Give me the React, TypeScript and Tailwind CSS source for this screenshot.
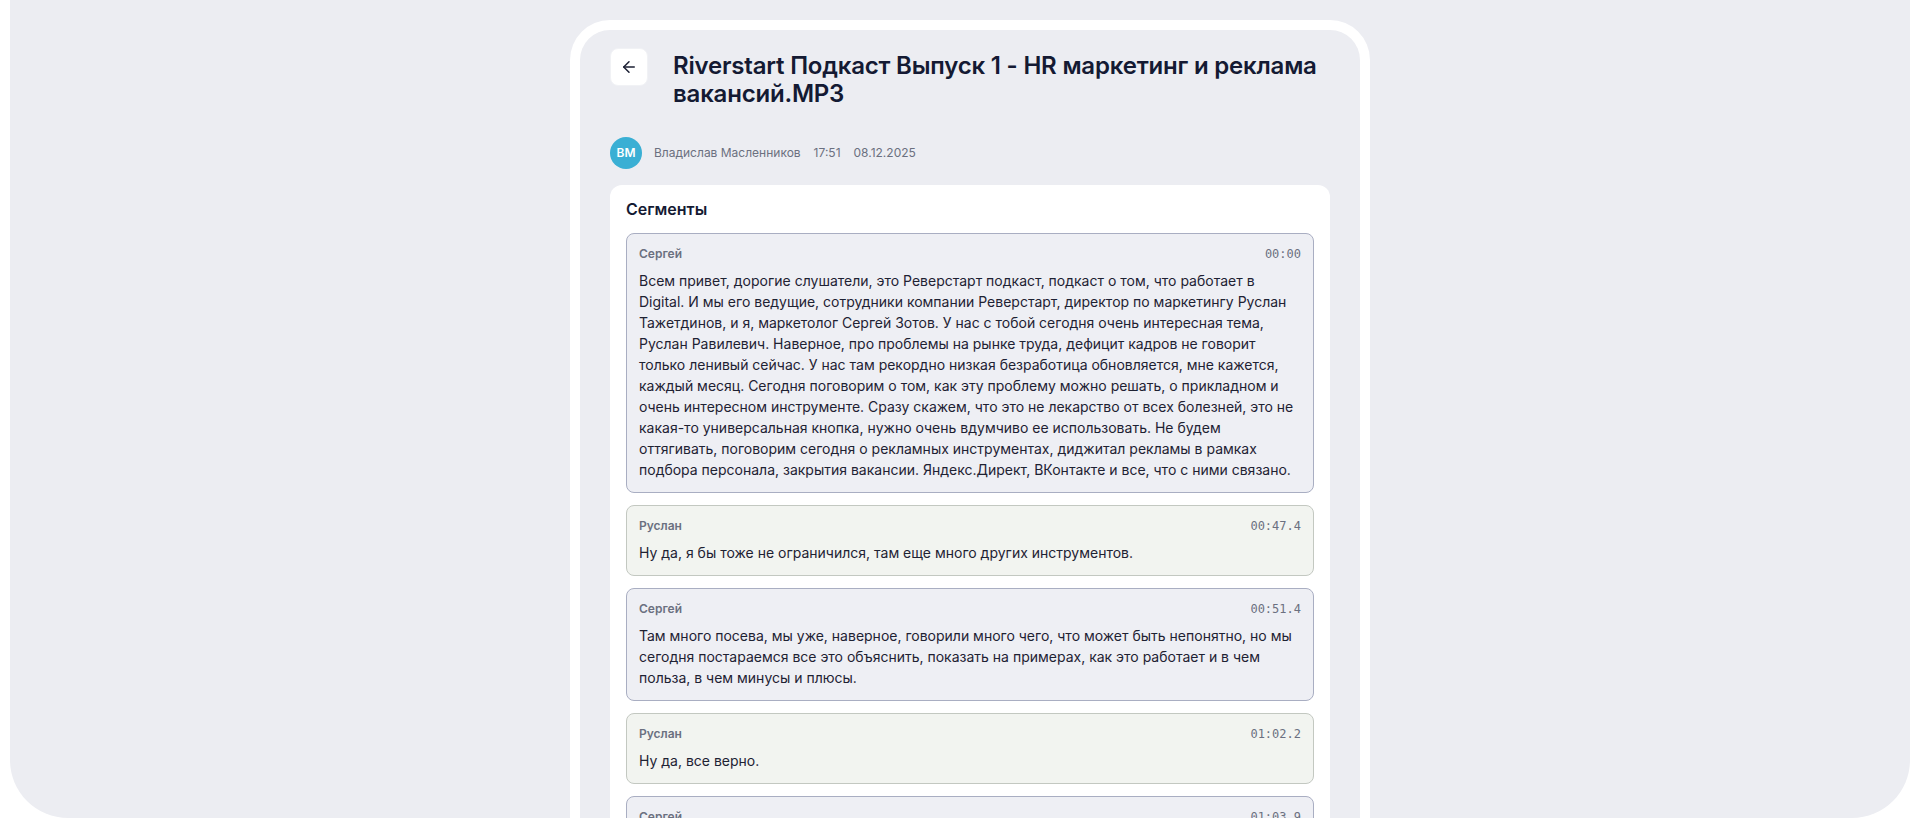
import React from "react";

type Seg = { speaker: string; time: string; text: string };

const segments: Seg[] = [
  {
    speaker: "Сергей",
    time: "00:00",
    text:
      "Всем привет, дорогие слушатели, это Реверстарт подкаст, подкаст о том, что работает в Digital. И мы его ведущие, сотрудники компании Реверстарт, директор по маркетингу Руслан Тажетдинов, и я, маркетолог Сергей Зотов. У нас с тобой сегодня очень интересная тема, Руслан Равилевич. Наверное, про проблемы на рынке труда, дефицит кадров не говорит только ленивый сейчас. У нас там рекордно низкая безработица обновляется, мне кажется, каждый месяц. Сегодня поговорим о том, как эту проблему можно решать, о прикладном и очень интересном инструменте. Сразу скажем, что это не лекарство от всех болезней, это не какая-то универсальная кнопка, нужно очень вдумчиво ее использовать. Не будем оттягивать, поговорим сегодня о рекламных инструментах, диджитал рекламы в рамках подбора персонала, закрытия вакансии. Яндекс.Директ, ВКонтакте и все, что с ними связано.",
  },
  {
    speaker: "Руслан",
    time: "00:47.4",
    text: "Ну да, я бы тоже не ограничился, там еще много других инструментов.",
  },
  {
    speaker: "Сергей",
    time: "00:51.4",
    text:
      "Там много посева, мы уже, наверное, говорили много чего, что может быть непонятно, но мы сегодня постараемся все это объяснить, показать на примерах, как это работает и в чем польза, в чем минусы и плюсы.",
  },
  { speaker: "Руслан", time: "01:02.2", text: "Ну да, все верно." },
  {
    speaker: "Сергей",
    time: "01:03.9",
    text: "Давай начнем с того, зачем вообще нужна реклама вакансий и чем она отличается от обычной.",
  },
];

function Segment({ s }: { s: Seg }) {
  const isSergey = s.speaker === "Сергей";
  return (
    <div
      className={
        isSergey
          ? "rounded-lg border border-[#a9aec2] bg-[#eeeff4] px-3 pt-3 pb-3"
          : "rounded-lg border border-[#c3c8c1] bg-[#f2f4f0] px-3 pt-3 pb-3"
      }
    >
      <div className="flex items-center justify-between leading-4">
        <span className="text-[12px] font-semibold text-[#6b7080]">{s.speaker}</span>
        <span className="text-[12px] text-[#6b7080] [font-family:'DejaVu_Sans_Mono','Liberation_Mono',monospace]">
          {s.time}
        </span>
      </div>
      <p className="mt-2 text-[14px] leading-[21px] text-[#1e2233]">{s.text}</p>
    </div>
  );
}

export default function App() {
  return (
    <div className="min-h-[818px] bg-white px-[10px] [font-family:Inter,'Noto_Sans',sans-serif]">
      <div className="flex h-[818px] justify-center overflow-hidden rounded-b-[58px] bg-[#ecedf2] pl-[20px] pt-[20px]">
        <div className="h-[900px] w-[800px] shrink-0 rounded-t-[40px] bg-white p-[10px]">
          <div className="h-full rounded-[30px] bg-[#ecedf2] px-[30px] pt-[18px]">
            <div className="flex items-start gap-[25px]">
              <button className="flex h-[38px] w-[38px] shrink-0 items-center justify-center rounded-lg border border-[#f1f2f5] bg-white">
                <svg
                  width="18"
                  height="18"
                  viewBox="0 0 24 24"
                  fill="none"
                  stroke="#1b1f33"
                  strokeWidth="2"
                  strokeLinecap="round"
                  strokeLinejoin="round"
                >
                  <path d="M19 12H5" />
                  <path d="M12 19l-7-7 7-7" />
                </svg>
              </button>
              <h1 className="mt-1 text-[24px] font-semibold leading-[28px] tracking-[-0.2px] text-[#141a33]">
                Riverstart Подкаст Выпуск 1 - HR маркетинг и реклама вакансий.MP3
              </h1>
            </div>

            <div className="mt-[29px] flex items-center gap-3">
              <div className="flex h-[32px] w-[32px] items-center justify-center rounded-full bg-[#3aafd4] text-[12px] font-semibold text-white">
                ВМ
              </div>
              <div className="flex items-center gap-[13px] text-[12px] text-[#6b7080]">
                <span>Владислав Масленников</span>
                <span>17:51</span>
                <span>08.12.2025</span>
              </div>
            </div>

            <div className="mt-[16px] rounded-xl bg-white px-4 pt-[14px] pb-4">
              <h2 className="mb-[14px] text-[16px] font-semibold leading-5 text-[#141a33]">Сегменты</h2>
              <div className="flex flex-col gap-3">
                {segments.map((s, i) => (
                  <Segment key={i} s={s} />
                ))}
              </div>
            </div>
          </div>
        </div>
      </div>
    </div>
  );
}
